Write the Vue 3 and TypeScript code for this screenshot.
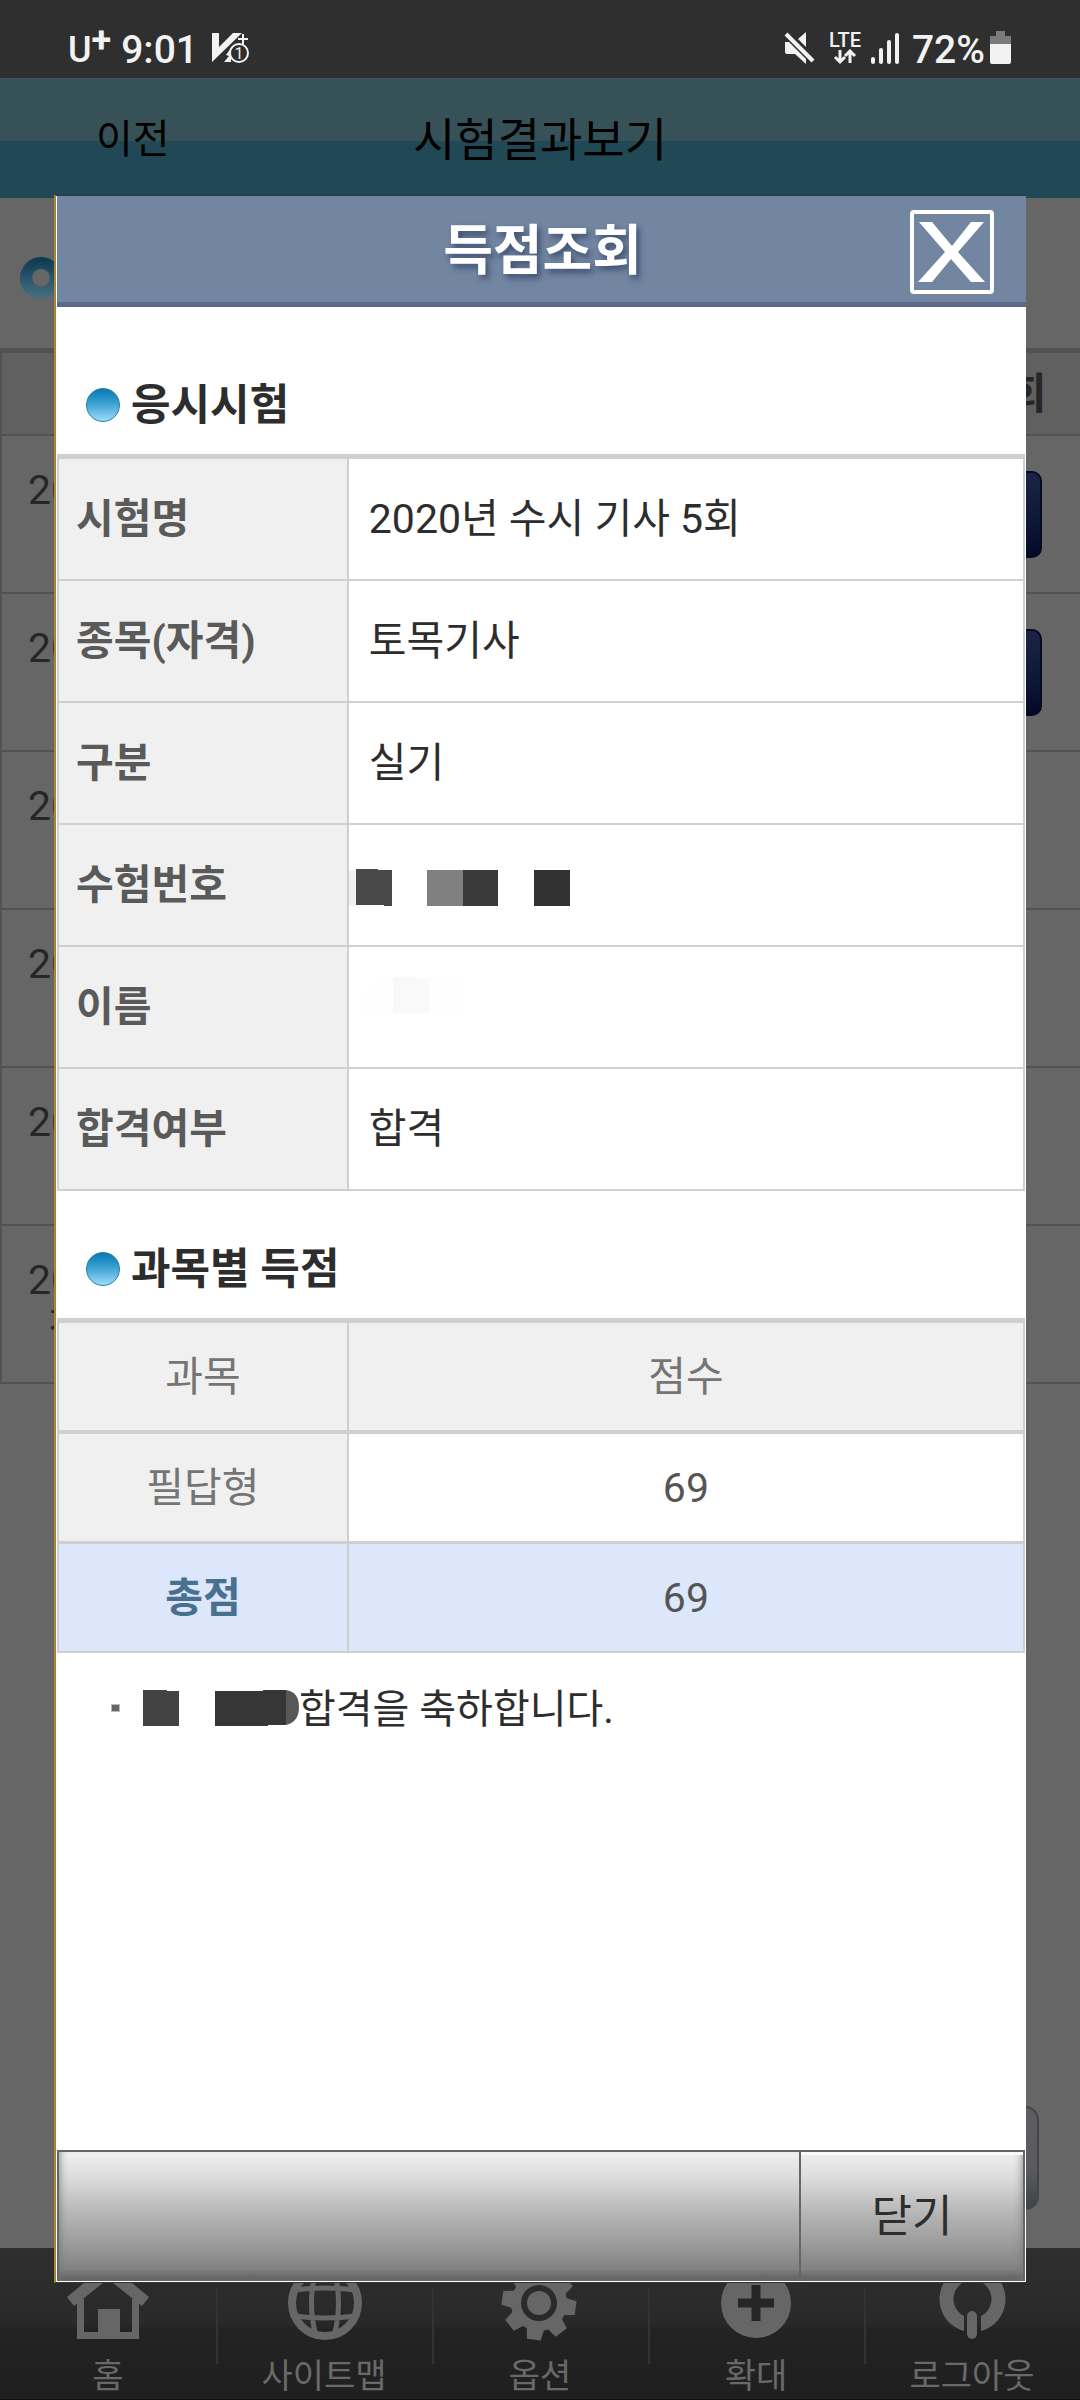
<script setup lang="ts">
interface ExamRow {
  first: string
  second: string
  viewable: boolean
}

interface InfoRow {
  label: string
  value: string
  mask?: 'number' | 'name'
}

interface TabItem {
  id: string
  label: string
}

const exams: ExamRow[] = [
  { first: '20', second: '', viewable: true },
  { first: '20', second: '', viewable: true },
  { first: '20', second: '', viewable: false },
  { first: '20', second: '', viewable: false },
  { first: '20', second: '', viewable: false },
  { first: '20', second: '정', viewable: false },
]

const info: InfoRow[] = [
  { label: '시험명', value: '2020년 수시 기사 5회' },
  { label: '종목(자격)', value: '토목기사' },
  { label: '구분', value: '실기' },
  { label: '수험번호', value: '', mask: 'number' },
  { label: '이름', value: '', mask: 'name' },
  { label: '합격여부', value: '합격' },
]

const tabs: TabItem[] = [
  { id: 'home', label: '홈' },
  { id: 'sitemap', label: '사이트맵' },
  { id: 'option', label: '옵션' },
  { id: 'zoom', label: '확대' },
  { id: 'logout', label: '로그아웃' },
]

const teeth: number[] = [0, 45, 90, 135, 180, 225, 270, 315]
</script>

<template>
  <div class="screen">
    <header class="status">
      <div class="status-side">
        <span class="carrier">U<span class="plus">+</span></span>
        <span class="clock">9:01</span>
        <svg class="v3" viewBox="0 0 38 32" width="38" height="32" aria-hidden="true">
          <path d="M0 1H7V15L21 1H30L0 30Z" fill="#f2f2f2" />
          <path d="M12 30L17 24L14 23L19 16V30Z" fill="#f2f2f2" />
          <path d="M26 7H36M31 2V12" stroke="#f2f2f2" stroke-width="2" />
          <circle cx="27" cy="21" r="9" fill="#2f2f2f" stroke="#f2f2f2" stroke-width="2" />
          <text x="27" y="27" text-anchor="middle" font-size="16" fill="#f2f2f2">1</text>
        </svg>
      </div>
      <div class="status-side">
        <svg class="mute" viewBox="0 0 32 32" width="32" height="32" aria-hidden="true">
          <path d="M1 10H5L22 27V32L11 22H3Q1 22 1 20ZM14 7L22 0V15Z" fill="#f2f2f2" />
          <path d="M2 2L29 29" stroke="#f2f2f2" stroke-width="4" />
        </svg>
        <span class="lte">
          LTE
          <svg viewBox="0 0 24 16" width="24" height="16" aria-hidden="true">
            <path d="M7 1V12M2 8L7 13L12 8M17 14V3M12 7L17 2L22 7" fill="none" stroke="#f2f2f2" stroke-width="3" />
          </svg>
        </span>
        <svg class="signal" viewBox="0 0 28 32" width="28" height="32" aria-hidden="true">
          <path d="M2 27V30M10 18V30M18 10V30M26 3V30" stroke="#f2f2f2" stroke-width="4" stroke-linecap="round" />
        </svg>
        <span class="clock">72%</span>
        <svg class="battery" viewBox="0 0 21 34" width="21" height="34" aria-hidden="true">
          <path d="M6 0H15V5H21V14H0V5H6Z" fill="#7b7b7b" />
          <path d="M0 13H21V31Q21 33 19 33H2Q0 33 0 31Z" fill="#f2f2f2" />
        </svg>
      </div>
    </header>

    <nav class="appbar">
      <button type="button" class="back">이전</button>
      <h1>시험결과보기</h1>
      <span></span>
    </nav>

    <main class="page">
      <div class="page-head"><span class="ring"></span></div>
      <table class="exams">
        <thead>
          <tr>
            <th class="when"></th>
            <th></th>
            <th class="view">조회</th>
          </tr>
        </thead>
        <tbody>
          <tr v-for="(exam, i) in exams" :key="i">
            <td class="when">
              <div>{{ exam.first }}</div>
              <div class="second">{{ exam.second }}</div>
            </td>
            <td></td>
            <td class="view">
              <button v-if="exam.viewable" type="button" class="view-btn" aria-label="득점조회"></button>
            </td>
          </tr>
        </tbody>
      </table>
      <button type="button" class="page-btn" aria-label="목록"></button>
    </main>

    <footer class="tabs">
      <button v-for="tab in tabs" :key="tab.id" type="button" class="tab">
        <svg viewBox="0 0 84 84" width="84" height="84" aria-hidden="true" fill="#666">
          <template v-if="tab.id === 'home'">
            <path d="M42 2L83 36L76 45L42 18L8 45L1 36Z" />
            <path d="M11 38H18V71H32V48H54V71H66V38H73V78H11Z" />
          </template>
          <template v-else-if="tab.id === 'sitemap'">
            <g fill="none" stroke="#666" stroke-width="5">
              <circle cx="43" cy="42" r="33" stroke-width="8" />
              <path d="M34 9Q25 42 34 75M52 9Q61 42 52 75M12 29Q43 25 74 29M12 55Q43 59 74 55" />
            </g>
          </template>
          <template v-else-if="tab.id === 'option'">
            <g transform="rotate(8 41 42)">
              <path v-for="deg in teeth" :key="deg" d="M32 18L34 5H48L50 18Z" :transform="`rotate(${deg} 41 42)`" />
            </g>
            <circle cx="41" cy="42" r="23" fill="none" stroke="#666" stroke-width="10" />
            <circle cx="41" cy="42" r="12" />
          </template>
          <template v-else-if="tab.id === 'zoom'">
            <circle cx="42" cy="42" r="35" />
            <path d="M24 42H60M42 24V60" stroke="#262626" stroke-width="9" />
          </template>
          <template v-else>
            <path d="M34 70A33 33 0 1 1 51 70V55A19 19 0 1 0 34 55Z" />
            <path d="M42 55V73" stroke="#666" stroke-width="10" stroke-linecap="round" />
          </template>
        </svg>
        <span>{{ tab.label }}</span>
      </button>
    </footer>

    <section class="dialog" role="dialog" aria-labelledby="dialog-title">
      <header class="dialog-head">
        <span></span>
        <h2 id="dialog-title">득점조회</h2>
        <button type="button" class="close" aria-label="닫기">
          <svg viewBox="0 0 68 60" width="68" height="60" aria-hidden="true">
            <path d="M1 0H14L34 24L53 0H66L40 30L67 60H53L33 37L14 60H0L27 30Z" fill="#fff" />
          </svg>
        </button>
      </header>

      <div class="dialog-body">
        <h3 class="first">응시시험</h3>
        <table class="info">
          <tbody>
            <tr v-for="row in info" :key="row.label">
              <th scope="row">{{ row.label }}</th>
              <td :class="{ masked: row.mask }">
                <svg v-if="row.mask === 'number'" viewBox="0 0 240 44" width="240" height="44" aria-hidden="true">
                  <path d="M7 7A18 18 0 0 0 7 43Z" fill="#f0f0f0" />
                  <path d="M7 6H29V7H43V43H35V42H7Z" fill="#494949" />
                  <path d="M78 7H114V43H78Z" fill="#808080" />
                  <path d="M114 7H149V43H114Z" fill="#393939" />
                  <path d="M185 7H221V43H185Z" fill="#323232" />
                </svg>
                <svg v-else-if="row.mask === 'name'" viewBox="0 0 240 60" width="240" height="60" aria-hidden="true">
                  <path d="M14 36Q12 4 44 0V36ZM80 2H115V36H80Z" fill="#fefefe" />
                  <path d="M44 0H62L80 2V36H44Z" fill="#f9f9f9" />
                </svg>
                <template v-else>{{ row.value }}</template>
              </td>
            </tr>
          </tbody>
        </table>

        <h3>과목별 득점</h3>
        <table class="scores">
          <thead>
            <tr>
              <th scope="col">과목</th>
              <th scope="col">점수</th>
            </tr>
          </thead>
          <tbody>
            <tr>
              <th scope="row">필답형</th>
              <td>69</td>
            </tr>
            <tr class="total">
              <th scope="row">총점</th>
              <td>69</td>
            </tr>
          </tbody>
        </table>

        <p class="note">
          <span class="dot"></span>
          <svg viewBox="0 0 156 38" width="156" height="38" aria-hidden="true">
            <path d="M0 1H24V2H36V37H0Z" fill="#434343" />
            <path d="M72 2H120V1H143V36H125V37H72Z" fill="#363636" />
            <path d="M143 1Q156 3 156 18T143 36Z" fill="#575757" />
          </svg>
          <span class="note-text">합격을 축하합니다.</span>
        </p>
      </div>

      <footer class="dialog-foot">
        <button type="button">닫기</button>
      </footer>
    </section>
  </div>
</template>

<style>
body {
  margin: 0;
  background: #666;
}
</style>

<style scoped>
* {
  box-sizing: border-box;
}

.screen {
  position: relative;
  display: flex;
  flex-direction: column;
  min-height: 100vh;
  background: #666;
  color: #2d2d2d;
  font-family: Roboto, "Noto Sans CJK KR", sans-serif;
  font-size: 41px;
  line-height: 48px;
  overflow: hidden;
}

button {
  margin: 0;
  padding: 0;
  border: 0;
  background: none;
  color: inherit;
  font: inherit;
}

h1,
h2,
h3,
p {
  margin: 0;
}

table {
  width: 100%;
  border-spacing: 0;
  table-layout: fixed;
}

th,
td {
  padding: 0;
}

/* status bar */
.status {
  display: flex;
  justify-content: space-between;
  height: 78px;
  padding: 20px 69px 0 68px;
  background: #2f2f2f;
  color: #f2f2f2;
}

.status-side {
  display: flex;
  align-items: center;
  height: 56px;
}

.carrier {
  display: flex;
  padding-top: 4px;
  font-size: 36px;
  font-weight: 500;
  line-height: 64px;
}

.plus {
  font-weight: 700;
  line-height: 44px;
}

.clock {
  padding-top: 4px;
  font-size: 39px;
  font-weight: 500;
  line-height: 60px;
}

.carrier + .clock {
  margin-left: 10px;
}

.v3 {
  margin-left: 14px;
}

.lte {
  display: flex;
  flex-direction: column;
  align-items: center;
  margin: 0 10px 0 13px;
  font-size: 20px;
  font-weight: 500;
  line-height: 17px;
}

.signal {
  margin-right: 13px;
}

.battery {
  margin-left: 5px;
}

/* app bar */
.appbar {
  display: grid;
  grid-template-columns: 1fr auto 1fr;
  align-items: center;
  height: 120px;
  padding: 4px 96px 0;
  background: linear-gradient(#375159 0 63px, #204955 63px);
  color: #000;
}

.back {
  justify-self: start;
  font-size: 40px;
}

.appbar h1 {
  font-size: 46px;
  font-weight: 400;
}

/* page below the dialog */
.page {
  display: flex;
  flex: 1;
  flex-direction: column;
  align-items: flex-end;
}

.page-head {
  display: flex;
  align-items: center;
  width: 100%;
  height: 150px;
  padding: 10px 20px 0;
}

.ring {
  width: 42px;
  height: 42px;
  border-radius: 50%;
  background: radial-gradient(circle, #666 0 8px, #3c5a69 9px, transparent 10px), linear-gradient(#0b3750, #2f5a70 60%, #49707f);
}

.exams {
  border-top: 5px solid #525252;
  border-left: 2px solid #525252;
}

.exams th,
.exams td {
  height: 158px;
  border-bottom: 2px solid #525252;
}

.exams th {
  height: 83px;
  background: #606060;
  color: #262626;
  font-size: 43px;
  font-weight: 700;
}

.exams td {
  color: #262626;
}

.exams td.when {
  padding-left: 26px;
}

.when .second {
  height: 48px;
  padding-left: 20px;
}

.exams .view {
  width: 146px;
}

.view-btn {
  display: block;
  width: 70px;
  height: 87px;
  margin: 0 auto;
  border: 2px solid #030a22;
  border-radius: 10px;
  background: linear-gradient(#1b2444, #101a38 50%, #030a26);
}

.page-btn {
  width: 120px;
  height: 104px;
  margin: auto 41px 38px 0;
  border: 2px solid #434547;
  border-radius: 14px;
  background: linear-gradient(#5d5e5f, #5a5b5c 60%, #404448);
}

/* bottom tabs */
.tabs {
  display: grid;
  grid-template-columns: repeat(5, 1fr);
  height: 152px;
  border-bottom: 1px solid #111;
  background: linear-gradient(#2f2f2f, #292929 50%, #232323 54%, #1f1f1f);
}

.tab {
  display: flex;
  flex-direction: column;
  align-items: center;
  gap: 7px;
  padding-top: 13px;
  background: linear-gradient(#333, #333) 0 40px / 2px 76px no-repeat;
  color: #696969;
  font-size: 34px;
}

.tab:first-child {
  background: none;
}

/* dialog */
.dialog {
  position: absolute;
  top: 194px;
  right: 54px;
  bottom: 117px;
  left: 54px;
  display: flex;
  flex-direction: column;
  padding: 0 0 1px 1px;
  border: 0 solid #a8842f;
  border-top: 2px solid #27404f;
  border-bottom: 1px solid #37342a;
  border-left-width: 2px;
  background: #fff;
}

.dialog-head {
  display: grid;
  grid-template-columns: 1fr auto 1fr;
  align-items: center;
  height: 111px;
  padding: 5px 32px 0 34px;
  border-bottom: 5px solid #5b6a88;
  background: #7286a1;
}

.dialog-head h2 {
  color: #fff;
  font-size: 54px;
  font-weight: 700;
  line-height: 80px;
  text-shadow: 3px 4px 6px #3c4c6e;
}

.close {
  display: flex;
  align-items: center;
  justify-content: center;
  justify-self: end;
  width: 84px;
  height: 84px;
  border: 4px solid #fff;
  border-radius: 4px;
}

.dialog-body {
  flex: 1;
  padding-right: 1px;
}

h3 {
  display: flex;
  align-items: center;
  gap: 11px;
  padding: 48px 29px 19px;
  font-size: 43px;
  font-weight: 700;
  line-height: 60px;
}

h3.first {
  padding-top: 68px;
}

h3::before {
  width: 32px;
  height: 32px;
  border: 1px solid #2b7f9c;
  border-radius: 50%;
  background: linear-gradient(#0a78b4, #3aa0d2 45%, #9bdcf8);
  content: "";
}

.info,
.scores {
  border-top: 5px solid #cfcfcf;
  border-left: 2px solid #cfcfcf;
}

.info th,
.info td,
.scores th,
.scores td {
  border: 0 solid #cfcfcf;
  border-right-width: 2px;
  border-bottom-width: 2px;
}

.info th,
.scores th:first-child {
  width: 30%;
}

.info th,
.info td {
  height: 122px;
  padding: 0 17px;
  text-align: left;
}

.info th {
  background: #f0f0f0;
  color: #5a5a5a;
  font-weight: 700;
}

.info td {
  padding-left: 20px;
}

.info td.masked {
  padding: 0;
}

.masked svg {
  display: block;
}

.scores th,
.scores td {
  height: 110px;
  color: #555;
  text-align: center;
}

.scores th {
  background: #f0f0f0;
  color: #757575;
  font-weight: 400;
}

.scores thead th {
  height: 111px;
  border-bottom-width: 4px;
}

.scores tbody th,
.scores tbody td {
  border-bottom-width: 3px;
}

.scores .total th,
.scores .total td {
  height: 109px;
  border-bottom-width: 2px;
  background: #dce7fb;
}

.scores .total th {
  color: #4a708f;
  font-weight: 700;
}

.note {
  display: flex;
  align-items: center;
  height: 110px;
  padding-left: 54px;
}

.dot {
  width: 9px;
  height: 8px;
  margin-right: 23px;
  border: 1px solid #bbb;
  background: #666;
}

.note-text {
  padding-top: 4px;
  font-size: 40px;
}

.dialog-foot {
  display: flex;
  justify-content: flex-end;
  height: 131px;
  margin-right: 1px;
  border: 2px solid #666;
  border-bottom: 0;
  background: linear-gradient(#f0f0f0, #d9d9d9 22%, #b6b6b6 47%, #989898 74%, #818181 91%, #666968 97%);
  box-shadow: inset 8px 0 8px -8px #777, inset -8px 0 8px -8px #777;
}

.dialog-foot button {
  width: 224px;
  border-left: 2px solid #666;
  box-shadow: inset 0 4px 0 -1px #fafafa;
  font-size: 44px;
}
</style>
